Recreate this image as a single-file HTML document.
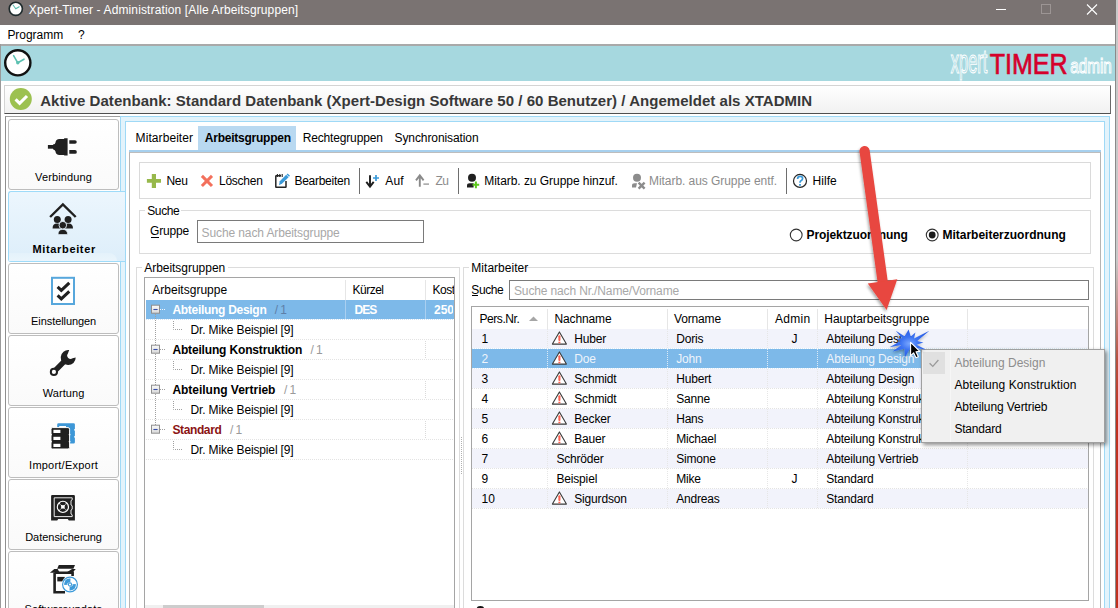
<!DOCTYPE html><html><head><meta charset="utf-8"><style>
html,body{margin:0;padding:0;}
body{width:1118px;height:608px;overflow:hidden;position:relative;background:#fff;font-family:"Liberation Sans",sans-serif;}
.t{position:absolute;white-space:pre;}
.r{position:absolute;box-sizing:border-box;}
svg{position:absolute;left:0;top:0;}
</style></head><body>
<div class="r" style="left:0px;top:0px;width:1116px;height:25px;background:#7a7372;"></div>
<div class="t " style="left:28.8px;top:3.2px;font-size:12px;line-height:14px;letter-spacing:0.130px;color:#fff;">Xpert-Timer - Administration [Alle Arbeitsgruppen]</div>
<div class="r" style="left:996px;top:9px;width:10px;height:1px;background:#fff;"></div>
<div class="r" style="left:1041px;top:4px;width:10px;height:10px;border:1px solid #9c9594;"></div>
<svg width="1118" height="30" style="left:0;top:0"><path d="M1087 4.5 L1097 14.5 M1097 4.5 L1087 14.5" stroke="#fff" stroke-width="1.1"/><circle cx="15.8" cy="8.8" r="6.6" fill="#fff" stroke="#1e2a2c" stroke-width="1.6"/><path d="M15.8 8.8 L13.2 5.2 M15.8 8.8 L19.2 6.8" stroke="#5bbdb0" stroke-width="1.1" stroke-linecap="round"/></svg>
<div class="r" style="left:0px;top:25px;width:1118px;height:19px;background:#fff;"></div>
<div class="t " style="left:7.4px;top:27.9px;font-size:12px;line-height:14px;letter-spacing:-0.039px;color:#000;">Programm</div>
<div class="t " style="left:78.0px;top:27.9px;font-size:12px;line-height:14px;color:#000;">?</div>
<div class="r" style="left:0px;top:44px;width:1118px;height:564px;background:#fff;"></div>
<div class="r" style="left:0px;top:44px;width:1116px;height:1.5px;background:#a9a9a9;"></div>
<div class="r" style="left:0px;top:44px;width:1px;height:564px;background:#9a9a9a;"></div>
<div class="r" style="left:1115px;top:25px;width:1px;height:583px;background:#8a8a8a;"></div>
<div class="r" style="left:1116px;top:0px;width:2px;height:608px;background:linear-gradient(#c9c9c9 0,#c9c9c9 260px,#b8503f 360px,#c0301f 420px,#c0301f 608px);"></div>
<div class="r" style="left:1px;top:45.5px;width:1114px;height:35.5px;background:#a6d8df;"></div>
<svg width="60" height="40" style="left:0;top:44px"><circle cx="17.8" cy="18.8" r="12.6" fill="#fff" stroke="#111" stroke-width="2.4"/><path d="M17.8 18.8 L13.6 11.6 M17.8 18.8 L24 15.2" stroke="#5cc1b1" stroke-width="1.6" stroke-linecap="round"/><circle cx="17.8" cy="18.8" r="1.7" fill="#5cc1b1"/></svg>
<svg width="1118" height="90" style="left:0;top:0"><text x="950.8" y="73.4" font-family="Liberation Sans" font-size="34" textLength="36.6" lengthAdjust="spacingAndGlyphs" fill="#a6d8df" stroke="#fff" stroke-width="1.2">xpert</text><text x="989.8" y="73.8" font-family="Liberation Sans" font-size="30" textLength="77.8" lengthAdjust="spacingAndGlyphs" fill="#d5002b" stroke="#d5002b" stroke-width="0.7">TIMER</text><text x="1070.2" y="73.4" font-family="Liberation Sans" font-size="19.5" textLength="41.6" lengthAdjust="spacingAndGlyphs" fill="#a6d8df" stroke="#fff" stroke-width="1">admin</text></svg>
<div class="r" style="left:4px;top:85px;width:1107px;height:28.5px;background:linear-gradient(#ffffff,#f1f1f1);border-top:1px solid #d4d4d4;border-left:1px solid #d4d4d4;border-right:1.5px solid #6a6a6a;border-bottom:1.5px solid #505050;"></div>
<svg width="40" height="40" style="left:0;top:80px"><circle cx="20.8" cy="19" r="11" fill="#9cc150"/><path d="M15.6 19.4 L19.6 23.4 L27 16" fill="none" stroke="#fff" stroke-width="3.1"/></svg>
<div class="t " style="left:40.2px;top:91.6px;font-size:15px;line-height:17px;font-weight:bold;letter-spacing:0.034px;color:#383838;">Aktive Datenbank: Standard Datenbank (Xpert-Design Software 50 / 60 Benutzer) / Angemeldet als XTADMIN</div>
<div class="r" style="left:120px;top:116px;width:990px;height:500px;background:#e3f3fb;border-left:1px solid #9fd9f6;border-top:1px solid #9fd9f6;border-right:1px solid #9fd9f6;"></div>
<div class="r" style="left:125px;top:121px;width:980px;height:500px;background:#fff;border-left:1px solid #9fd9f6;border-top:1px solid #9fd9f6;border-right:1px solid #9fd9f6;"></div>
<div class="r" style="left:5px;top:116px;width:115px;height:500px;background:#fff;border-left:1px solid #8f8f8f;border-top:1px solid #a0a0a0;"></div>
<div class="r" style="left:8px;top:119px;width:111px;height:71px;border:1px solid #bdbdbd;border-radius:3px;background:linear-gradient(#fff,#fafafa);"></div>
<div class="t " style="left:35.1px;top:170.8px;font-size:11px;line-height:13px;letter-spacing:0.130px;color:#000;">Verbindung</div>
<div class="r" style="left:8px;top:191px;width:117px;height:71px;border:1px solid #9edbf9;border-right:none;border-radius:3px 0 0 3px;background:linear-gradient(#ecf6fd,#ddeefa);"></div>
<div class="r" style="left:9px;top:253px;width:108px;height:8px;background:linear-gradient(#e4f2fb,#eaf5fc);border-radius:0 8px 0 0;"></div>
<div class="t " style="left:32.5px;top:242.8px;font-size:11px;line-height:13px;font-weight:bold;letter-spacing:0.650px;color:#000;">Mitarbeiter</div>
<div class="r" style="left:8px;top:263px;width:111px;height:71px;border:1px solid #bdbdbd;border-radius:3px;background:linear-gradient(#fff,#fafafa);"></div>
<div class="t " style="left:31.1px;top:314.8px;font-size:11px;line-height:13px;letter-spacing:-0.084px;color:#000;">Einstellungen</div>
<div class="r" style="left:8px;top:335px;width:111px;height:71px;border:1px solid #bdbdbd;border-radius:3px;background:linear-gradient(#fff,#fafafa);"></div>
<div class="t " style="left:42.7px;top:386.8px;font-size:11px;line-height:13px;letter-spacing:0.087px;color:#000;">Wartung</div>
<div class="r" style="left:8px;top:407px;width:111px;height:71px;border:1px solid #bdbdbd;border-radius:3px;background:linear-gradient(#fff,#fafafa);"></div>
<div class="t " style="left:29.1px;top:458.8px;font-size:11px;line-height:13px;letter-spacing:0.226px;color:#000;">Import/Export</div>
<div class="r" style="left:8px;top:479px;width:111px;height:71px;border:1px solid #bdbdbd;border-radius:3px;background:linear-gradient(#fff,#fafafa);"></div>
<div class="t " style="left:25.2px;top:530.8px;font-size:11px;line-height:13px;letter-spacing:-0.028px;color:#000;">Datensicherung</div>
<div class="r" style="left:8px;top:551px;width:111px;height:71px;border:1px solid #bdbdbd;border-radius:3px;background:linear-gradient(#fff,#fafafa);"></div>
<div class="t " style="left:24.6px;top:602.8px;font-size:11px;line-height:13px;letter-spacing:0.062px;color:#000;">Softwareupdate</div>
<svg width="130" height="608" style="left:0;top:0"><rect x="47.9" y="145" width="6" height="3.7" fill="#202020"/><path d="M53 144.6 Q55.3 144.4 55.5 142.6 Q55.8 139 59.5 139 L64 139 L64.3 138.2 L67.6 138.2 L67.6 155.6 L64.3 155.6 L64 155 L59.5 155 Q55.8 155 55.5 151.6 Q55.3 149.8 53 149.2 Z" fill="#202020"/><path d="M69.3 140.3 L75 140.3 A1.75 1.75 0 0 1 75 143.8 L69.3 143.8 Z M69.3 150.1 L75 150.1 A1.85 1.85 0 0 1 75 153.8 L69.3 153.8 Z" fill="#202020"/><path d="M50.1 217 L62.9 204.4 L75.7 217" fill="none" stroke="#202020" stroke-width="2.4"/><circle cx="57.3" cy="219.4" r="3.5" fill="#202020"/><circle cx="68.1" cy="219.4" r="3.5" fill="#202020"/><path d="M52.6 228.4 Q52.4 223.6 57.2 223.6 Q61.6 223.6 61.8 228.4 Z M64 228.4 Q64.2 223.6 68.4 223.6 Q73 223.6 73 228.4 Z" fill="#202020"/><circle cx="62.8" cy="225.2" r="3.8" fill="#202020" stroke="#e4f1fa" stroke-width="0.9"/><path d="M58 234.6 Q58 229.4 62.8 229.4 Q67.6 229.4 67.6 234.6 Z" fill="#202020" stroke="#e4f1fa" stroke-width="0.7"/><rect x="52" y="277.8" width="22" height="26.2" fill="#fff" stroke="#57a7dc" stroke-width="2"/><path d="M57.6 286.8 L61.3 290.4 L69.3 282.8 M57.6 295.3 L61.3 298.9 L69.3 291.3" fill="none" stroke="#202020" stroke-width="3"/><path d="M53.9 371.9 L64 361.6" stroke="#202020" stroke-width="5.4" stroke-linecap="round"/><circle cx="53.9" cy="371.9" r="4.1" fill="#202020"/><path d="M75.7 357.4 A7.5 7.5 0 1 1 69.2 350.1 L67.9 353.5 A3.4 3.4 0 0 0 72.6 358.3 Z" fill="#202020"/><circle cx="53.9" cy="371.9" r="2.1" fill="#fff"/><path d="M57.2 435 L57.2 424.6 Q57.2 423.2 58.6 423.2 L73.6 423.2 Q74.9 423.2 74.9 424.6 L74.9 442.2 Q74.9 443.6 73.6 443.6 L66 443.6 L66 426 L59.2 426 L59.2 435 Z" fill="#3d97d7"/><rect x="51" y="427.6" width="18.6" height="21.4" rx="1.6" fill="#202020" stroke="#fff" stroke-width="1"/><rect x="53.4" y="429.8" width="7" height="3.2" fill="#fff"/><rect x="53.4" y="436.8" width="7" height="3.2" fill="#fff"/><rect x="53.4" y="443.8" width="7" height="3.2" fill="#fff"/><circle cx="51" cy="434.6" r="0.9" fill="#fff"/><circle cx="69.6" cy="434.6" r="0.9" fill="#fff"/><circle cx="51" cy="441.6" r="0.9" fill="#fff"/><circle cx="69.6" cy="441.6" r="0.9" fill="#fff"/><circle cx="75" cy="429.8" r="0.9" fill="#fff"/><circle cx="75" cy="436.8" r="0.9" fill="#fff"/><path d="M51.1 496 Q51.1 494.9 52.2 494.9 L73.8 494.9 Q74.9 494.9 74.9 496 L74.9 520.5 L68.8 520.5 L67.8 519 L58.2 519 L57.2 520.5 L51.1 520.5 Z" fill="#202020"/><path d="M54.2 497.8 L72.2 497.8 L72.2 499.8 L71 500.6 L71 505 L72.2 505.8 L72.2 509.2 L71 510 L71 514 L72.2 514.8 L72.2 516.6 L54.2 516.6 Z" fill="none" stroke="#fff" stroke-width="0.9"/><clipPath id="dialc"><circle cx="62.9" cy="506.9" r="5.1"/></clipPath><circle cx="62.9" cy="506.9" r="5.1" fill="#fff"/><g clip-path="url(#dialc)"><ellipse cx="62.9" cy="502.7" rx="3" ry="2.5" fill="#202020"/><ellipse cx="62.9" cy="511.1" rx="3" ry="2.5" fill="#202020"/><ellipse cx="58.7" cy="506.9" rx="2.5" ry="3" fill="#202020"/><ellipse cx="67.1" cy="506.9" rx="2.5" ry="3" fill="#202020"/></g><circle cx="62.9" cy="506.9" r="5.6" fill="none" stroke="#fff" stroke-width="1.1"/><path d="M58.8 565 L75 565 L73.4 568.8 L57.2 568.8 Z" fill="#202020"/><path d="M49.9 572.8 L54.3 569 L57.6 569 L59.8 572.8 Z M66 572.8 L72 569 L75.8 569 L72.4 572.8 Z" fill="#202020"/><path d="M54.6 572.8 L54.6 592.2 L65 592.2 M54.6 572.8 L72.6 572.8 L72.6 576" fill="none" stroke="#202020" stroke-width="2.6"/><rect x="57.3" y="576.9" width="7.4" height="4.5" fill="#202020"/><circle cx="70" cy="584.5" r="8.4" fill="#fff"/><circle cx="70" cy="584.5" r="7.4" fill="none" stroke="#3d9ad9" stroke-width="1.2"/><path d="M65 581 A6 6 0 0 1 70.5 578.6 L70.3 582.2 A2.4 2.4 0 0 0 67.8 583.5 Z M75 588 A6 6 0 0 1 69.5 590.4 L69.7 586.8 A2.4 2.4 0 0 0 72.2 585.5 Z" fill="#3d9ad9"/><path d="M66.8 579.4 A6 6 0 0 0 64.2 585 L67.6 584.7 Z M73.2 589.6 A6 6 0 0 0 75.8 584 L72.4 584.3 Z" fill="#3d9ad9"/><circle cx="70" cy="584.5" r="1.6" fill="none" stroke="#3d9ad9" stroke-width="1.1"/></svg>
<div class="r" style="left:198px;top:126px;width:98px;height:24px;background:#b9d9f1;"></div>
<div class="t " style="left:135.6px;top:131.0px;font-size:12px;line-height:14px;letter-spacing:0.074px;color:#000;">Mitarbeiter</div>
<div class="t " style="left:204.8px;top:131.0px;font-size:12px;line-height:14px;font-weight:bold;letter-spacing:-0.238px;color:#000;">Arbeitsgruppen</div>
<div class="t " style="left:302.7px;top:131.0px;font-size:12px;line-height:14px;letter-spacing:-0.157px;color:#000;">Rechtegruppen</div>
<div class="t " style="left:394.5px;top:131.0px;font-size:12px;line-height:14px;letter-spacing:-0.092px;color:#000;">Synchronisation</div>
<div class="r" style="left:129px;top:150px;width:972px;height:2px;background:#a7d0ee;"></div>
<div class="r" style="left:129px;top:152px;width:972px;height:460px;background:#fff;border-left:1px solid #b4b4b4;border-top:1px solid #bdbdbd;border-right:1px solid #b4b4b4;"></div>
<div class="r" style="left:139px;top:162px;width:952px;height:37px;border:1px solid #dadada;background:#fff;"></div>
<div class="t " style="left:166.4px;top:174.0px;font-size:12px;line-height:14px;letter-spacing:-0.272px;color:#000;">Neu</div>
<div class="t " style="left:219.0px;top:174.0px;font-size:12px;line-height:14px;letter-spacing:-0.251px;color:#000;">Löschen</div>
<div class="t " style="left:294.4px;top:174.0px;font-size:12px;line-height:14px;letter-spacing:-0.263px;color:#000;">Bearbeiten</div>
<div class="t " style="left:385.3px;top:174.0px;font-size:12px;line-height:14px;letter-spacing:0.100px;color:#000;">Auf</div>
<div class="t " style="left:435.5px;top:174.0px;font-size:12px;line-height:14px;letter-spacing:-0.500px;color:#8c8c8c;">Zu</div>
<div class="t " style="left:484.3px;top:174.0px;font-size:12px;line-height:14px;letter-spacing:-0.048px;color:#000;">Mitarb. zu Gruppe hinzuf.</div>
<div class="t " style="left:649.0px;top:174.0px;font-size:12px;line-height:14px;letter-spacing:-0.056px;color:#8c8c8c;">Mitarb. aus Gruppe entf.</div>
<div class="t " style="left:812.5px;top:174.0px;font-size:12px;line-height:14px;letter-spacing:0.057px;color:#000;">Hilfe</div>
<div class="r" style="left:359px;top:168px;width:1px;height:26px;background:#6e6e6e;"></div>
<div class="r" style="left:458px;top:168px;width:1px;height:26px;background:#6e6e6e;"></div>
<div class="r" style="left:786px;top:168px;width:1px;height:26px;background:#6e6e6e;"></div>
<svg width="1118" height="200" style="left:0;top:0"><path d="M146.9 178.9 H161 V182.8 H146.9 Z M151.8 174.1 H156 V188 H151.8 Z" fill="#97b84b"/><path d="M201.9 175.9 L212 186 M212 175.9 L201.9 186" stroke="#f3705c" stroke-width="3"/><path d="M286 181 V186.9 Q286 187.3 285.6 187.3 H276.2 Q275.8 187.3 275.8 186.9 V176.2 Q275.8 175.7 276.3 175.7 H281" fill="none" stroke="#252525" stroke-width="1.5"/><path d="M277.4 174 V177 M279.8 174 V177 M282.2 174 V177" stroke="#252525" stroke-width="1.1"/><path d="M279 185.2 L279.8 181.2 L286.2 174.8 L288.6 177.2 L282.2 183.6 Z" fill="#3b9ad9"/><path d="M286.6 174.4 L287.6 173.4 L290 175.8 L289 176.8 Z" fill="#3b9ad9"/><path d="M370 175.2 V186.4 M366.3 181.8 L370 186.6 L373.7 181.8" fill="none" stroke="#1e1e1e" stroke-width="1.9"/><path d="M373 178 H379 M376 175 V181" stroke="#3b9ad9" stroke-width="1.7"/><path d="M419.8 186.7 V175.5 M416 180.4 L419.8 175.4 L423.6 180.4" fill="none" stroke="#8a8a8a" stroke-width="1.9"/><path d="M423.4 184.1 H429" stroke="#9a9a9a" stroke-width="1.4"/><circle cx="472" cy="177.8" r="4" fill="#202020"/><path d="M467 187.6 L467 185.6 Q467 183.3 469.6 183.3 L473.6 183.3 L473.6 187.6 Z" fill="#202020"/><path d="M472.6 184.8 H479.2 M475.9 181.5 V188.2" stroke="#5ec81e" stroke-width="2"/><circle cx="637" cy="177.8" r="4" fill="#8c8c8c"/><path d="M632 187.6 L632 185.6 Q632 183.3 634.6 183.3 L637 183.3 L636 187.6 Z" fill="#8c8c8c"/><path d="M638.6 182.6 L644.6 188.6 M644.6 182.6 L638.6 188.6" stroke="#8c8c8c" stroke-width="2.4"/><circle cx="800" cy="180.9" r="6.5" fill="#fff" stroke="#262626" stroke-width="1.2"/><path d="M797.6 179 Q797.6 176.4 800.1 176.4 Q802.6 176.4 802.6 178.6 Q802.6 180 801 180.8 Q800 181.4 800 182.8" fill="none" stroke="#3b9ad9" stroke-width="1.7"/><rect x="799.1" y="184" width="1.8" height="1.8" fill="#3b9ad9"/></svg>
<div class="r" style="left:139px;top:210px;width:952px;height:44px;border:1px solid #dcdcdc;"></div>
<div class="r" style="left:145px;top:205px;width:36px;height:10px;background:#fff;"></div>
<div class="t " style="left:147.2px;top:204.2px;font-size:12px;line-height:14px;letter-spacing:-0.363px;color:#000;">Suche</div>
<div class="t " style="left:150.0px;top:224.4px;font-size:12px;line-height:14px;letter-spacing:-0.169px;color:#000;">Gruppe</div>
<div class="r" style="left:150.5px;top:236.6px;width:8px;height:1px;background:#000;"></div>
<div class="r" style="left:197px;top:220px;width:227px;height:23px;border:1px solid #7a7a7a;background:#fff;"></div>
<div class="t " style="left:201.6px;top:225.6px;font-size:12px;line-height:14px;letter-spacing:-0.114px;color:#a8a8a8;">Suche nach Arbeitsgruppe</div>
<svg width="1118" height="260" style="left:0;top:0"><circle cx="796.2" cy="235" r="5.9" fill="#fff" stroke="#333" stroke-width="1.1"/><circle cx="932.2" cy="235" r="5.9" fill="#fff" stroke="#333" stroke-width="1.1"/><circle cx="932.2" cy="235" r="3.4" fill="#1a1a1a"/></svg>
<div class="t " style="left:806.6px;top:228.0px;font-size:12px;line-height:14px;font-weight:bold;letter-spacing:-0.103px;color:#000;">Projektzuordnung</div>
<div class="t " style="left:942.4px;top:228.0px;font-size:12px;line-height:14px;font-weight:bold;letter-spacing:0.004px;color:#000;">Mitarbeiterzuordnung</div>
<div class="r" style="left:136px;top:267px;width:324px;height:360px;border:1px solid #dcdcdc;"></div>
<div class="r" style="left:142px;top:262px;width:86px;height:10px;background:#fff;"></div>
<div class="t " style="left:144.2px;top:261.0px;font-size:12px;line-height:14px;letter-spacing:-0.027px;color:#000;">Arbeitsgruppen</div>
<div class="r" style="left:144px;top:277px;width:311px;height:340px;border:1px solid #a5a5a5;background:#fff;"></div>
<div class="t " style="left:152.2px;top:283.0px;font-size:12px;line-height:14px;letter-spacing:0.023px;color:#000;">Arbeitsgruppe</div>
<div class="t " style="left:352.5px;top:283.0px;font-size:12px;line-height:14px;letter-spacing:-0.503px;color:#000;">Kürzel</div>
<div class="t " style="left:432.5px;top:283.0px;font-size:12px;line-height:14px;letter-spacing:-0.500px;color:#000;overflow:hidden;width:21px;">Kost</div>
<div class="r" style="left:345px;top:280px;width:1px;height:20px;background:#e6e6e6;"></div>
<div class="r" style="left:425px;top:280px;width:1px;height:20px;background:#e6e6e6;"></div>
<div class="r" style="left:146px;top:300px;width:308px;height:19px;background:#7db9e9;"></div>
<div class="r" style="left:345px;top:300px;width:1px;height:19px;background:#a9cff0;"></div>
<div class="r" style="left:425px;top:300px;width:1px;height:19px;background:#a9cff0;"></div>
<div class="t " style="left:172.4px;top:302.6px;font-size:12px;line-height:14px;font-weight:bold;letter-spacing:-0.290px;color:#fff;">Abteilung Design</div>
<div class="t " style="left:274.7px;top:302.6px;font-size:12px;line-height:14px;letter-spacing:-0.609px;color:#5d7fa8;">/ 1</div>
<div class="t " style="left:354.4px;top:302.6px;font-size:12px;line-height:14px;font-weight:bold;letter-spacing:-0.891px;color:#fff;">DES</div>
<div class="t " style="left:434.0px;top:302.6px;font-size:12px;line-height:14px;font-weight:bold;color:#fff;overflow:hidden;width:19px;">250</div>
<div class="r" style="left:146px;top:319px;width:308px;height:1px;background-image:linear-gradient(90deg,#cfe3f5 50%,transparent 50%);background-size:2px 1px;"></div>
<div class="t " style="left:190.5px;top:322.6px;font-size:12px;line-height:14px;letter-spacing:-0.144px;color:#000;">Dr. Mike Beispiel [9]</div>
<div class="r" style="left:146px;top:339px;width:308px;height:1px;background-image:linear-gradient(90deg,#e3e3e3 50%,transparent 50%);background-size:2px 1px;"></div>
<div class="t " style="left:172.4px;top:342.6px;font-size:12px;line-height:14px;font-weight:bold;letter-spacing:-0.159px;color:#000;">Abteilung Konstruktion</div>
<div class="t " style="left:310.5px;top:342.6px;font-size:12px;line-height:14px;letter-spacing:-0.609px;color:#9a9a9a;">/ 1</div>
<div class="r" style="left:425px;top:341px;width:1px;height:18px;background-image:linear-gradient(#dadada 50%,transparent 50%);background-size:1px 2px;"></div>
<div class="r" style="left:146px;top:359px;width:308px;height:1px;background-image:linear-gradient(90deg,#e3e3e3 50%,transparent 50%);background-size:2px 1px;"></div>
<div class="t " style="left:190.5px;top:362.6px;font-size:12px;line-height:14px;letter-spacing:-0.144px;color:#000;">Dr. Mike Beispiel [9]</div>
<div class="r" style="left:146px;top:379px;width:308px;height:1px;background-image:linear-gradient(90deg,#e3e3e3 50%,transparent 50%);background-size:2px 1px;"></div>
<div class="t " style="left:172.4px;top:382.6px;font-size:12px;line-height:14px;font-weight:bold;letter-spacing:-0.018px;color:#000;">Abteilung Vertrieb</div>
<div class="t " style="left:284.0px;top:382.6px;font-size:12px;line-height:14px;letter-spacing:-0.609px;color:#9a9a9a;">/ 1</div>
<div class="r" style="left:425px;top:381px;width:1px;height:18px;background-image:linear-gradient(#dadada 50%,transparent 50%);background-size:1px 2px;"></div>
<div class="r" style="left:146px;top:399px;width:308px;height:1px;background-image:linear-gradient(90deg,#e3e3e3 50%,transparent 50%);background-size:2px 1px;"></div>
<div class="t " style="left:190.5px;top:402.6px;font-size:12px;line-height:14px;letter-spacing:-0.144px;color:#000;">Dr. Mike Beispiel [9]</div>
<div class="r" style="left:146px;top:419px;width:308px;height:1px;background-image:linear-gradient(90deg,#e3e3e3 50%,transparent 50%);background-size:2px 1px;"></div>
<div class="t " style="left:172.4px;top:422.6px;font-size:12px;line-height:14px;font-weight:bold;letter-spacing:-0.375px;color:#8b1414;">Standard</div>
<div class="t " style="left:230.1px;top:422.6px;font-size:12px;line-height:14px;letter-spacing:-0.609px;color:#9a9a9a;">/ 1</div>
<div class="r" style="left:425px;top:421px;width:1px;height:18px;background-image:linear-gradient(#dadada 50%,transparent 50%);background-size:1px 2px;"></div>
<div class="r" style="left:146px;top:439px;width:308px;height:1px;background-image:linear-gradient(90deg,#e3e3e3 50%,transparent 50%);background-size:2px 1px;"></div>
<div class="t " style="left:190.5px;top:442.6px;font-size:12px;line-height:14px;letter-spacing:-0.144px;color:#000;">Dr. Mike Beispiel [9]</div>
<div class="r" style="left:146px;top:459px;width:308px;height:1px;background-image:linear-gradient(90deg,#e3e3e3 50%,transparent 50%);background-size:2px 1px;"></div>
<svg width="1118" height="608" style="left:0;top:0"><path d="M155.5 314 V425" stroke="#a0a0a0" stroke-width="1" stroke-dasharray="1 1"/><rect x="151.5" y="305.2" width="8" height="8" fill="url(#mb)" stroke="#8f8f8f" stroke-width="1"/><path d="M153.4 309.5 H157.6" stroke="#3a50a8" stroke-width="1.1"/><path d="M160 309.5 H165" stroke="#f4f8fc" stroke-width="1" stroke-dasharray="1 1"/><path d="M173.5 321 V329.5 H182" fill="none" stroke="#a0a0a0" stroke-width="1" stroke-dasharray="1 1"/><rect x="151.5" y="345.2" width="8" height="8" fill="url(#mb)" stroke="#8f8f8f" stroke-width="1"/><path d="M153.4 349.5 H157.6" stroke="#3a50a8" stroke-width="1.1"/><path d="M160 349.5 H165" stroke="#a0a0a0" stroke-width="1" stroke-dasharray="1 1"/><path d="M173.5 361 V369.5 H182" fill="none" stroke="#a0a0a0" stroke-width="1" stroke-dasharray="1 1"/><rect x="151.5" y="385.2" width="8" height="8" fill="url(#mb)" stroke="#8f8f8f" stroke-width="1"/><path d="M153.4 389.5 H157.6" stroke="#3a50a8" stroke-width="1.1"/><path d="M160 389.5 H165" stroke="#a0a0a0" stroke-width="1" stroke-dasharray="1 1"/><path d="M173.5 401 V409.5 H182" fill="none" stroke="#a0a0a0" stroke-width="1" stroke-dasharray="1 1"/><rect x="151.5" y="425.2" width="8" height="8" fill="url(#mb)" stroke="#8f8f8f" stroke-width="1"/><path d="M153.4 429.5 H157.6" stroke="#3a50a8" stroke-width="1.1"/><path d="M160 429.5 H165" stroke="#a0a0a0" stroke-width="1" stroke-dasharray="1 1"/><path d="M173.5 441 V449.5 H182" fill="none" stroke="#a0a0a0" stroke-width="1" stroke-dasharray="1 1"/><defs><linearGradient id="mb" x1="0" y1="0" x2="0" y2="1"><stop offset="0" stop-color="#fbfbfb"/><stop offset="1" stop-color="#d9d9d9"/></linearGradient></defs></svg>
<div class="r" style="left:145px;top:605px;width:309px;height:10px;background:#f0f0f0;"></div>
<div class="r" style="left:163px;top:605px;width:101px;height:10px;background:#cdcdcd;"></div>
<div class="r" style="left:461px;top:437px;width:1px;height:38px;background-image:linear-gradient(#b0b0b0 50%,transparent 50%);background-size:1px 2px;"></div>
<div class="r" style="left:463px;top:267px;width:631px;height:360px;border:1px solid #dcdcdc;"></div>
<div class="r" style="left:469px;top:262px;width:55px;height:10px;background:#fff;"></div>
<div class="t " style="left:471.3px;top:261.2px;font-size:12px;line-height:14px;letter-spacing:0.028px;color:#000;">Mitarbeiter</div>
<div class="t " style="left:471.3px;top:282.7px;font-size:12px;line-height:14px;letter-spacing:-0.403px;color:#000;">Suche</div>
<div class="r" style="left:471.5px;top:295px;width:6.5px;height:1px;background:#000;"></div>
<div class="r" style="left:509px;top:280px;width:580px;height:20px;border:1px solid #7a7a7a;background:#fff;"></div>
<div class="t " style="left:514.0px;top:284.0px;font-size:12px;line-height:14px;letter-spacing:-0.138px;color:#a8a8a8;">Suche nach Nr./Name/Vorname</div>
<div class="r" style="left:471px;top:306px;width:618px;height:295px;border:1px solid #a5a5a5;background:#fff;"></div>
<div class="t " style="left:479.4px;top:312.0px;font-size:12px;line-height:14px;letter-spacing:-0.418px;color:#000;">Pers.Nr.</div>
<div class="t " style="left:554.5px;top:312.0px;font-size:12px;line-height:14px;letter-spacing:-0.129px;color:#000;">Nachname</div>
<div class="t " style="left:674.0px;top:312.0px;font-size:12px;line-height:14px;letter-spacing:-0.147px;color:#000;">Vorname</div>
<div class="t " style="left:775.0px;top:312.0px;font-size:12px;line-height:14px;letter-spacing:0.277px;color:#000;">Admin</div>
<div class="t " style="left:824.3px;top:312.0px;font-size:12px;line-height:14px;letter-spacing:-0.022px;color:#000;">Hauptarbeitsgruppe</div>
<div class="r" style="left:547px;top:309px;width:1px;height:20px;background:#e6e6e6;"></div>
<div class="r" style="left:667px;top:309px;width:1px;height:20px;background:#e6e6e6;"></div>
<div class="r" style="left:767px;top:309px;width:1px;height:20px;background:#e6e6e6;"></div>
<div class="r" style="left:817px;top:309px;width:1px;height:20px;background:#e6e6e6;"></div>
<div class="r" style="left:967px;top:309px;width:1px;height:20px;background:#e6e6e6;"></div>
<svg width="1118" height="608" style="left:0;top:0"><path d="M529 321 L533.5 316.6 L538 321 Z" fill="#a6a6a6"/></svg>
<div class="r" style="left:472px;top:329px;width:616px;height:19px;background:#f2f3fb;"></div>
<div class="r" style="left:547px;top:329px;width:1px;height:19px;background-image:linear-gradient(#e6e6e6 50%,transparent 50%);background-size:1px 2px;"></div>
<div class="r" style="left:667px;top:329px;width:1px;height:19px;background-image:linear-gradient(#e6e6e6 50%,transparent 50%);background-size:1px 2px;"></div>
<div class="r" style="left:767px;top:329px;width:1px;height:19px;background-image:linear-gradient(#e6e6e6 50%,transparent 50%);background-size:1px 2px;"></div>
<div class="r" style="left:817px;top:329px;width:1px;height:19px;background-image:linear-gradient(#e6e6e6 50%,transparent 50%);background-size:1px 2px;"></div>
<div class="r" style="left:967px;top:329px;width:1px;height:19px;background-image:linear-gradient(#e6e6e6 50%,transparent 50%);background-size:1px 2px;"></div>
<div class="r" style="left:472px;top:348px;width:616px;height:1px;background-image:linear-gradient(90deg,#dbeaf7 50%,transparent 50%);background-size:2px 1px;"></div>
<div class="t " style="left:481.6px;top:331.5px;font-size:12px;line-height:14px;color:#000;">1</div>
<div class="t " style="left:574.3px;top:331.5px;font-size:12px;line-height:14px;letter-spacing:-0.196px;color:#000;">Huber</div>
<div class="t " style="left:676.2px;top:331.5px;font-size:12px;line-height:14px;letter-spacing:-0.168px;color:#000;">Doris</div>
<div class="t " style="left:791.5px;top:331.5px;font-size:12px;line-height:14px;color:#000;">J</div>
<div class="t " style="left:826.3px;top:331.5px;font-size:12px;line-height:14px;letter-spacing:-0.170px;color:#000;">Abteilung Design</div>
<div class="r" style="left:472px;top:349px;width:616px;height:19px;background:#7db9e9;"></div>
<div class="r" style="left:547px;top:349px;width:1px;height:19px;background-image:linear-gradient(#dbeaf7 50%,transparent 50%);background-size:1px 2px;"></div>
<div class="r" style="left:667px;top:349px;width:1px;height:19px;background-image:linear-gradient(#dbeaf7 50%,transparent 50%);background-size:1px 2px;"></div>
<div class="r" style="left:767px;top:349px;width:1px;height:19px;background-image:linear-gradient(#dbeaf7 50%,transparent 50%);background-size:1px 2px;"></div>
<div class="r" style="left:817px;top:349px;width:1px;height:19px;background-image:linear-gradient(#dbeaf7 50%,transparent 50%);background-size:1px 2px;"></div>
<div class="r" style="left:967px;top:349px;width:1px;height:19px;background-image:linear-gradient(#dbeaf7 50%,transparent 50%);background-size:1px 2px;"></div>
<div class="r" style="left:472px;top:368px;width:616px;height:1px;background-image:linear-gradient(90deg,#dbeaf7 50%,transparent 50%);background-size:2px 1px;"></div>
<div class="t " style="left:481.6px;top:351.5px;font-size:12px;line-height:14px;color:#eef4fb;">2</div>
<div class="t " style="left:574.3px;top:351.5px;font-size:12px;line-height:14px;letter-spacing:-0.220px;color:#eef4fb;">Doe</div>
<div class="t " style="left:676.2px;top:351.5px;font-size:12px;line-height:14px;letter-spacing:-0.195px;color:#eef4fb;">John</div>
<div class="t " style="left:826.3px;top:351.5px;font-size:12px;line-height:14px;letter-spacing:-0.170px;color:#eef4fb;">Abteilung Design</div>
<div class="r" style="left:472px;top:369px;width:616px;height:19px;background:#f2f3fb;"></div>
<div class="r" style="left:547px;top:369px;width:1px;height:19px;background-image:linear-gradient(#e6e6e6 50%,transparent 50%);background-size:1px 2px;"></div>
<div class="r" style="left:667px;top:369px;width:1px;height:19px;background-image:linear-gradient(#e6e6e6 50%,transparent 50%);background-size:1px 2px;"></div>
<div class="r" style="left:767px;top:369px;width:1px;height:19px;background-image:linear-gradient(#e6e6e6 50%,transparent 50%);background-size:1px 2px;"></div>
<div class="r" style="left:817px;top:369px;width:1px;height:19px;background-image:linear-gradient(#e6e6e6 50%,transparent 50%);background-size:1px 2px;"></div>
<div class="r" style="left:967px;top:369px;width:1px;height:19px;background-image:linear-gradient(#e6e6e6 50%,transparent 50%);background-size:1px 2px;"></div>
<div class="r" style="left:472px;top:388px;width:616px;height:1px;background-image:linear-gradient(90deg,#e3e3e3 50%,transparent 50%);background-size:2px 1px;"></div>
<div class="t " style="left:481.6px;top:371.5px;font-size:12px;line-height:14px;color:#000;">3</div>
<div class="t " style="left:574.3px;top:371.5px;font-size:12px;line-height:14px;letter-spacing:-0.186px;color:#000;">Schmidt</div>
<div class="t " style="left:676.2px;top:371.5px;font-size:12px;line-height:14px;letter-spacing:-0.180px;color:#000;">Hubert</div>
<div class="t " style="left:826.3px;top:371.5px;font-size:12px;line-height:14px;letter-spacing:-0.170px;color:#000;">Abteilung Design</div>
<div class="r" style="left:547px;top:389px;width:1px;height:19px;background-image:linear-gradient(#e6e6e6 50%,transparent 50%);background-size:1px 2px;"></div>
<div class="r" style="left:667px;top:389px;width:1px;height:19px;background-image:linear-gradient(#e6e6e6 50%,transparent 50%);background-size:1px 2px;"></div>
<div class="r" style="left:767px;top:389px;width:1px;height:19px;background-image:linear-gradient(#e6e6e6 50%,transparent 50%);background-size:1px 2px;"></div>
<div class="r" style="left:817px;top:389px;width:1px;height:19px;background-image:linear-gradient(#e6e6e6 50%,transparent 50%);background-size:1px 2px;"></div>
<div class="r" style="left:967px;top:389px;width:1px;height:19px;background-image:linear-gradient(#e6e6e6 50%,transparent 50%);background-size:1px 2px;"></div>
<div class="r" style="left:472px;top:408px;width:616px;height:1px;background-image:linear-gradient(90deg,#e3e3e3 50%,transparent 50%);background-size:2px 1px;"></div>
<div class="t " style="left:481.6px;top:391.5px;font-size:12px;line-height:14px;color:#000;">4</div>
<div class="t " style="left:574.3px;top:391.5px;font-size:12px;line-height:14px;letter-spacing:-0.186px;color:#000;">Schmidt</div>
<div class="t " style="left:676.2px;top:391.5px;font-size:12px;line-height:14px;letter-spacing:-0.208px;color:#000;">Sanne</div>
<div class="t " style="left:826.3px;top:391.5px;font-size:12px;line-height:14px;letter-spacing:-0.164px;color:#000;">Abteilung Konstruktion</div>
<div class="r" style="left:472px;top:409px;width:616px;height:19px;background:#f2f3fb;"></div>
<div class="r" style="left:547px;top:409px;width:1px;height:19px;background-image:linear-gradient(#e6e6e6 50%,transparent 50%);background-size:1px 2px;"></div>
<div class="r" style="left:667px;top:409px;width:1px;height:19px;background-image:linear-gradient(#e6e6e6 50%,transparent 50%);background-size:1px 2px;"></div>
<div class="r" style="left:767px;top:409px;width:1px;height:19px;background-image:linear-gradient(#e6e6e6 50%,transparent 50%);background-size:1px 2px;"></div>
<div class="r" style="left:817px;top:409px;width:1px;height:19px;background-image:linear-gradient(#e6e6e6 50%,transparent 50%);background-size:1px 2px;"></div>
<div class="r" style="left:967px;top:409px;width:1px;height:19px;background-image:linear-gradient(#e6e6e6 50%,transparent 50%);background-size:1px 2px;"></div>
<div class="r" style="left:472px;top:428px;width:616px;height:1px;background-image:linear-gradient(90deg,#e3e3e3 50%,transparent 50%);background-size:2px 1px;"></div>
<div class="t " style="left:481.6px;top:411.5px;font-size:12px;line-height:14px;color:#000;">5</div>
<div class="t " style="left:574.3px;top:411.5px;font-size:12px;line-height:14px;letter-spacing:-0.187px;color:#000;">Becker</div>
<div class="t " style="left:676.2px;top:411.5px;font-size:12px;line-height:14px;letter-spacing:-0.210px;color:#000;">Hans</div>
<div class="t " style="left:826.3px;top:411.5px;font-size:12px;line-height:14px;letter-spacing:-0.164px;color:#000;">Abteilung Konstruktion</div>
<div class="r" style="left:547px;top:429px;width:1px;height:19px;background-image:linear-gradient(#e6e6e6 50%,transparent 50%);background-size:1px 2px;"></div>
<div class="r" style="left:667px;top:429px;width:1px;height:19px;background-image:linear-gradient(#e6e6e6 50%,transparent 50%);background-size:1px 2px;"></div>
<div class="r" style="left:767px;top:429px;width:1px;height:19px;background-image:linear-gradient(#e6e6e6 50%,transparent 50%);background-size:1px 2px;"></div>
<div class="r" style="left:817px;top:429px;width:1px;height:19px;background-image:linear-gradient(#e6e6e6 50%,transparent 50%);background-size:1px 2px;"></div>
<div class="r" style="left:967px;top:429px;width:1px;height:19px;background-image:linear-gradient(#e6e6e6 50%,transparent 50%);background-size:1px 2px;"></div>
<div class="r" style="left:472px;top:448px;width:616px;height:1px;background-image:linear-gradient(90deg,#e3e3e3 50%,transparent 50%);background-size:2px 1px;"></div>
<div class="t " style="left:481.6px;top:431.5px;font-size:12px;line-height:14px;color:#000;">6</div>
<div class="t " style="left:574.3px;top:431.5px;font-size:12px;line-height:14px;letter-spacing:-0.192px;color:#000;">Bauer</div>
<div class="t " style="left:676.2px;top:431.5px;font-size:12px;line-height:14px;letter-spacing:-0.177px;color:#000;">Michael</div>
<div class="t " style="left:826.3px;top:431.5px;font-size:12px;line-height:14px;letter-spacing:-0.164px;color:#000;">Abteilung Konstruktion</div>
<div class="r" style="left:472px;top:449px;width:616px;height:19px;background:#f2f3fb;"></div>
<div class="r" style="left:547px;top:449px;width:1px;height:19px;background-image:linear-gradient(#e6e6e6 50%,transparent 50%);background-size:1px 2px;"></div>
<div class="r" style="left:667px;top:449px;width:1px;height:19px;background-image:linear-gradient(#e6e6e6 50%,transparent 50%);background-size:1px 2px;"></div>
<div class="r" style="left:767px;top:449px;width:1px;height:19px;background-image:linear-gradient(#e6e6e6 50%,transparent 50%);background-size:1px 2px;"></div>
<div class="r" style="left:817px;top:449px;width:1px;height:19px;background-image:linear-gradient(#e6e6e6 50%,transparent 50%);background-size:1px 2px;"></div>
<div class="r" style="left:967px;top:449px;width:1px;height:19px;background-image:linear-gradient(#e6e6e6 50%,transparent 50%);background-size:1px 2px;"></div>
<div class="r" style="left:472px;top:468px;width:616px;height:1px;background-image:linear-gradient(90deg,#e3e3e3 50%,transparent 50%);background-size:2px 1px;"></div>
<div class="t " style="left:481.6px;top:451.5px;font-size:12px;line-height:14px;color:#000;">7</div>
<div class="t " style="left:556.4px;top:451.5px;font-size:12px;line-height:14px;letter-spacing:-0.183px;color:#000;">Schröder</div>
<div class="t " style="left:676.2px;top:451.5px;font-size:12px;line-height:14px;letter-spacing:-0.203px;color:#000;">Simone</div>
<div class="t " style="left:826.3px;top:451.5px;font-size:12px;line-height:14px;letter-spacing:-0.158px;color:#000;">Abteilung Vertrieb</div>
<div class="r" style="left:547px;top:469px;width:1px;height:19px;background-image:linear-gradient(#e6e6e6 50%,transparent 50%);background-size:1px 2px;"></div>
<div class="r" style="left:667px;top:469px;width:1px;height:19px;background-image:linear-gradient(#e6e6e6 50%,transparent 50%);background-size:1px 2px;"></div>
<div class="r" style="left:767px;top:469px;width:1px;height:19px;background-image:linear-gradient(#e6e6e6 50%,transparent 50%);background-size:1px 2px;"></div>
<div class="r" style="left:817px;top:469px;width:1px;height:19px;background-image:linear-gradient(#e6e6e6 50%,transparent 50%);background-size:1px 2px;"></div>
<div class="r" style="left:967px;top:469px;width:1px;height:19px;background-image:linear-gradient(#e6e6e6 50%,transparent 50%);background-size:1px 2px;"></div>
<div class="r" style="left:472px;top:488px;width:616px;height:1px;background-image:linear-gradient(90deg,#e3e3e3 50%,transparent 50%);background-size:2px 1px;"></div>
<div class="t " style="left:481.6px;top:471.5px;font-size:12px;line-height:14px;color:#000;">9</div>
<div class="t " style="left:556.4px;top:471.5px;font-size:12px;line-height:14px;letter-spacing:-0.158px;color:#000;">Beispiel</div>
<div class="t " style="left:676.2px;top:471.5px;font-size:12px;line-height:14px;letter-spacing:-0.190px;color:#000;">Mike</div>
<div class="t " style="left:791.5px;top:471.5px;font-size:12px;line-height:14px;color:#000;">J</div>
<div class="t " style="left:826.3px;top:471.5px;font-size:12px;line-height:14px;letter-spacing:-0.183px;color:#000;">Standard</div>
<div class="r" style="left:472px;top:489px;width:616px;height:19px;background:#f2f3fb;"></div>
<div class="r" style="left:547px;top:489px;width:1px;height:19px;background-image:linear-gradient(#e6e6e6 50%,transparent 50%);background-size:1px 2px;"></div>
<div class="r" style="left:667px;top:489px;width:1px;height:19px;background-image:linear-gradient(#e6e6e6 50%,transparent 50%);background-size:1px 2px;"></div>
<div class="r" style="left:767px;top:489px;width:1px;height:19px;background-image:linear-gradient(#e6e6e6 50%,transparent 50%);background-size:1px 2px;"></div>
<div class="r" style="left:817px;top:489px;width:1px;height:19px;background-image:linear-gradient(#e6e6e6 50%,transparent 50%);background-size:1px 2px;"></div>
<div class="r" style="left:967px;top:489px;width:1px;height:19px;background-image:linear-gradient(#e6e6e6 50%,transparent 50%);background-size:1px 2px;"></div>
<div class="r" style="left:472px;top:508px;width:616px;height:1px;background-image:linear-gradient(90deg,#e3e3e3 50%,transparent 50%);background-size:2px 1px;"></div>
<div class="t " style="left:481.6px;top:491.5px;font-size:12px;line-height:14px;color:#000;">10</div>
<div class="t " style="left:574.3px;top:491.5px;font-size:12px;line-height:14px;letter-spacing:-0.180px;color:#000;">Sigurdson</div>
<div class="t " style="left:676.2px;top:491.5px;font-size:12px;line-height:14px;letter-spacing:-0.192px;color:#000;">Andreas</div>
<div class="t " style="left:826.3px;top:491.5px;font-size:12px;line-height:14px;letter-spacing:-0.183px;color:#000;">Standard</div>
<svg width="1118" height="608" style="left:0;top:0"><path d="M559.4 331.9 L566.4 344.1 L552.4 344.1 Z" fill="#fff" stroke="#3a3a3a" stroke-width="1.1" stroke-linejoin="round"/><path d="M559.4 336.3 V339.9" stroke="#fb6150" stroke-width="2.1" stroke-linecap="round"/><rect x="558.4" y="341.7" width="2" height="1.5" fill="#fb6150"/><path d="M559.4 351.9 L566.4 364.1 L552.4 364.1 Z" fill="#fff" stroke="#3a3a3a" stroke-width="1.1" stroke-linejoin="round"/><path d="M559.4 356.3 V359.9" stroke="#fb6150" stroke-width="2.1" stroke-linecap="round"/><rect x="558.4" y="361.7" width="2" height="1.5" fill="#fb6150"/><path d="M559.4 371.9 L566.4 384.1 L552.4 384.1 Z" fill="#fff" stroke="#3a3a3a" stroke-width="1.1" stroke-linejoin="round"/><path d="M559.4 376.3 V379.9" stroke="#fb6150" stroke-width="2.1" stroke-linecap="round"/><rect x="558.4" y="381.7" width="2" height="1.5" fill="#fb6150"/><path d="M559.4 391.9 L566.4 404.1 L552.4 404.1 Z" fill="#fff" stroke="#3a3a3a" stroke-width="1.1" stroke-linejoin="round"/><path d="M559.4 396.3 V399.9" stroke="#fb6150" stroke-width="2.1" stroke-linecap="round"/><rect x="558.4" y="401.7" width="2" height="1.5" fill="#fb6150"/><path d="M559.4 411.9 L566.4 424.1 L552.4 424.1 Z" fill="#fff" stroke="#3a3a3a" stroke-width="1.1" stroke-linejoin="round"/><path d="M559.4 416.3 V419.9" stroke="#fb6150" stroke-width="2.1" stroke-linecap="round"/><rect x="558.4" y="421.7" width="2" height="1.5" fill="#fb6150"/><path d="M559.4 431.9 L566.4 444.1 L552.4 444.1 Z" fill="#fff" stroke="#3a3a3a" stroke-width="1.1" stroke-linejoin="round"/><path d="M559.4 436.3 V439.9" stroke="#fb6150" stroke-width="2.1" stroke-linecap="round"/><rect x="558.4" y="441.7" width="2" height="1.5" fill="#fb6150"/><path d="M559.4 491.9 L566.4 504.1 L552.4 504.1 Z" fill="#fff" stroke="#3a3a3a" stroke-width="1.1" stroke-linejoin="round"/><path d="M559.4 496.3 V499.9" stroke="#fb6150" stroke-width="2.1" stroke-linecap="round"/><rect x="558.4" y="501.7" width="2" height="1.5" fill="#fb6150"/></svg>
<div class="r" style="left:921px;top:349px;width:184px;height:94px;background:#f0f0f0;border:1px solid #a0a0a0;box-shadow:2px 2px 4px rgba(0,0,0,0.45);"></div>
<div class="r" style="left:923px;top:352px;width:22px;height:22px;background:#e0e0e0;"></div>
<div class="r" style="left:950px;top:350px;width:1px;height:92px;background:#f6f6f6;"></div>
<svg width="1118" height="608" style="left:0;top:0"><path d="M929.6 363.2 L932.8 366.4 L938.4 360" fill="none" stroke="#9a9a9a" stroke-width="1.3"/></svg>
<div class="t " style="left:954.4px;top:356.2px;font-size:12px;line-height:14px;letter-spacing:0.018px;color:#8d8d8d;">Abteilung Design</div>
<div class="t " style="left:954.4px;top:378.0px;font-size:12px;line-height:14px;letter-spacing:0.089px;color:#000;">Abteilung Konstruktion</div>
<div class="t " style="left:954.4px;top:399.7px;font-size:12px;line-height:14px;letter-spacing:-0.095px;color:#000;">Abteilung Vertrieb</div>
<div class="t " style="left:954.4px;top:422.0px;font-size:12px;line-height:14px;letter-spacing:-0.211px;color:#000;">Standard</div>
<svg width="1118" height="608" style="left:0;top:0"><defs><filter id="sh" x="-50%" y="-50%" width="200%" height="200%"><feGaussianBlur in="SourceAlpha" stdDeviation="1.6"/><feOffset dx="-1" dy="1.5"/><feComponentTransfer><feFuncA type="linear" slope="0.35"/></feComponentTransfer><feMerge><feMergeNode/><feMergeNode in="SourceGraphic"/></feMerge></filter></defs><g filter="url(#sh)" fill="#e8473f"><path d="M864.6 151 L882.6 281.3" stroke="#e8473f" stroke-width="10.2" stroke-linecap="round" fill="none"/><path d="M867.8 283.4 L897.3 279.2 L886.6 309.9 Z"/></g><defs><radialGradient id="sg" cx="0.5" cy="0.5" r="0.5"><stop offset="0" stop-color="#7aa8ff"/><stop offset="0.45" stop-color="#3d74f2"/><stop offset="1" stop-color="#2a5ee6"/></radialGradient></defs><g filter="url(#sh)"><path d="M908.6 329.6 L910.8 336.6 L915.4 332.6 L914 338.4 L929.4 330.8 L917.2 341 L923.4 342.4 L916.6 344.8 L925.8 349.4 L914.6 348 L912.8 353.6 L909.6 349.2 L904.8 357.4 L904.6 348.8 L892.6 351.4 L901.4 345 L889.6 347.2 L900.6 341 L896.4 338.8 L902.2 338.2 L895.8 330.8 L904.6 336.2 Z" fill="url(#sg)"/></g><path d="M910.6 342.4 L910.6 355.8 L913.6 352.8 L916 357.8 L918.4 356.8 L916 351.8 L919.8 351.4 Z" fill="#000" stroke="#fff" stroke-width="1.1" stroke-linejoin="round"/></svg>
<svg width="1118" height="608" style="left:0;top:0"><ellipse cx="480.4" cy="608.5" rx="3.6" ry="2.6" fill="#111"/></svg>
</body></html>
